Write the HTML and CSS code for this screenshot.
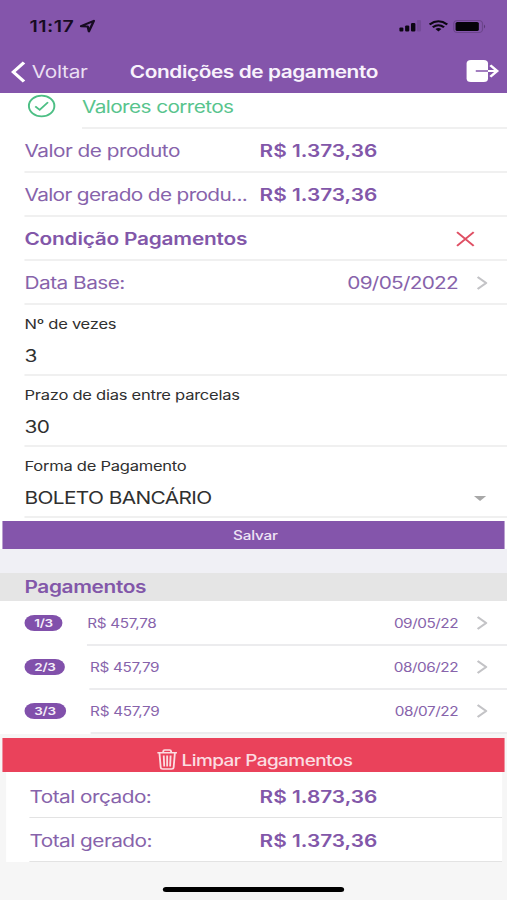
FILE: index.html
```html
<!DOCTYPE html>
<html lang="pt-BR">
<head>
    <meta charset="UTF-8">
    <meta name="viewport" content="width=device-width, initial-scale=1.0">
    <title>Condições de pagamento</title>
    <link rel="stylesheet" href="styles.css">
</head>
<body>
    <div class="screen">
        <header class="header">
            <div class="status">
                <span class="time">11:17</span>
                <svg class="location" width="13" height="14" viewBox="0 0 13 14"><path d="M1.2 7.2L11.6 1.8L7.6 12.4L6.6 7.4Z" fill="none" stroke="#170b22" stroke-width="2" stroke-linejoin="round"/></svg>
                <svg class="signal" width="18" height="12" viewBox="0 0 18 12">
                    <g fill="#0c0612"><rect x="0" y="7.5" width="3.4" height="4" rx="1"/><rect x="4.8" y="5.5" width="3.4" height="6" rx="1"/><rect x="9.6" y="3" width="3.6" height="8.5" rx="1"/></g>
                    <rect x="14.4" y="0" width="3.4" height="11.5" rx="1" fill="#754b98"/>
                </svg>
                <svg class="wifi" width="16" height="12" viewBox="0 0 16 12" fill="none" stroke="#0c0612" stroke-width="2"><path d="M.8 4.4Q8-2 15.2 4.4"/><path d="M3.4 7.3Q8 3.2 12.6 7.3"/><path d="M5.6 8.9Q8 7 10.4 8.9L8 11.6Z" fill="#0c0612" stroke="none"/></svg>
                <svg class="battery" width="27" height="13" viewBox="0 0 27 13"><rect x=".5" y=".5" width="23.5" height="12" rx="3" fill="none" stroke="#6c458c"/><rect x="2" y="2" width="19" height="9" rx="1.5" fill="#050308"/><path d="M25.3 4.5Q27 6.5 25.3 8.5Z" fill="#54366e"/></svg>
            </div>
            <div class="nav">
                <a class="back">
                    <svg width="12" height="22" viewBox="0 0 12 22"><path d="M10.6 1.5L1.8 11L10.6 20.5" fill="none" stroke="#fff" stroke-width="2.8"/></svg>
                    <span>Voltar</span>
                </a>
                <h1>Condições de pagamento</h1>
                <svg class="exit" width="28" height="24" viewBox="0 0 28 24"><rect x="1" y="1" width="17.5" height="22" rx="3.5" fill="#fff"/><path d="M8.5 12H18.5" stroke="#8455ab" stroke-width="1.6"/><path d="M18.5 12H26M20.4 6.2L26 12L20.4 17.8" fill="none" stroke="#fff" stroke-width="2.2"/></svg>
            </div>
        </header>

        <main>
            <div class="row first">
                <svg class="check" width="24" height="24" viewBox="0 0 24 24" fill="none" stroke="#4dbf85" stroke-width="1.6"><circle cx="12" cy="12" r="10.4"/><path d="M6.8 12.4L10.4 15.8L17.2 8.2"/></svg>
                <span class="correct">Valores corretos</span>
            </div>
            <div class="row">
                <span class="label">Valor de produto</span>
                <b>R$ 1.373,36</b>
            </div>
            <div class="row">
                <span class="label long">Valor gerado de produ...</span>
                <b>R$ 1.373,36</b>
            </div>
            <div class="row">
                <h2>Condição Pagamentos</h2>
                <svg class="close" width="16" height="16" viewBox="0 0 16 16"><path d="M1.2 1.2L14.8 14.8M14.8 1.2L1.2 14.8" stroke="#df5064" stroke-width="1.7"/></svg>
            </div>
            <div class="row">
                <span class="label">Data Base:</span>
                <span class="date">09/05/2022</span>
                <svg class="chevron" width="9" height="14" viewBox="0 0 9 14"><path d="M1 1L8 7L1 13"/></svg>
            </div>
            <div class="field">
                <label>Nº de vezes</label>
                <span class="value">3</span>
            </div>
            <div class="field">
                <label>Prazo de dias entre parcelas</label>
                <span class="value">30</span>
            </div>
            <div class="field">
                <label>Forma de Pagamento</label>
                <span class="value">BOLETO BANCÁRIO <i class="arrow"></i></span>
            </div>
            <button class="save">Salvar</button>

            <h2 class="section">Pagamentos</h2>
            <div class="payment">
                <span class="badge">1/3</span>
                <div class="info">
                    <span>R$ 457,78</span>
                    <span class="due">09/05/22</span>
                    <svg class="chevron" width="9" height="14" viewBox="0 0 9 14"><path d="M1 1L8 7L1 13"/></svg>
                </div>
            </div>
            <div class="payment">
                <span class="badge">2/3</span>
                <div class="info">
                    <span>R$ 457,79</span>
                    <span class="due">08/06/22</span>
                    <svg class="chevron" width="9" height="14" viewBox="0 0 9 14"><path d="M1 1L8 7L1 13"/></svg>
                </div>
            </div>
            <div class="payment">
                <span class="badge">3/3</span>
                <div class="info">
                    <span>R$ 457,79</span>
                    <span class="due">08/07/22</span>
                    <svg class="chevron" width="9" height="14" viewBox="0 0 9 14"><path d="M1 1L8 7L1 13"/></svg>
                </div>
            </div>
        </main>

        <footer>
            <button class="clear">
                <svg width="17" height="21" viewBox="0 0 17 21" fill="none" stroke="#fbdde1" stroke-width="1.5"><path d="M.5 3.8H16.5M5.3 3.6V2.2Q5.3 1 6.5 1H10.5Q11.7 1 11.7 2.2V3.6M2.2 4L3.2 18.2Q3.3 20 5 20H12Q13.7 20 13.8 18.2L14.8 4M5.7 6.5L6.1 17.5M8.5 6.5V17.5M11.3 6.5L10.9 17.5"/></svg>
                <span>Limpar Pagamentos</span>
            </button>
            <div class="totals">
                <div class="total">
                    <span class="label">Total orçado:</span>
                    <b>R$ 1.873,36</b>
                </div>
                <div class="total">
                    <span class="label">Total gerado:</span>
                    <b>R$ 1.373,36</b>
                </div>
            </div>
            <div class="home"></div>
        </footer>
    </div>
</body>
</html>
```
FILE: styles.css
```css
* {
    box-sizing: border-box;
}

body {
    margin: 0;
    overflow: hidden;
    font-family: Inter, "Liberation Sans", sans-serif;
    background-color: #f6f6f6;
}

.screen {
    width: 414px;
    height: 900px;
    overflow: hidden;
    transform: scaleX(1.22464);
    transform-origin: 0 0;
    font-size: 17px;
    color: #8763ab;
    background-color: #f6f6f6;
}

h1, h2 {
    margin: 0;
    font-size: 17px;
    font-weight: 600;
}

button {
    display: flex;
    align-items: center;
    justify-content: center;
    width: 410px;
    padding: 0;
    border: none;
    font-family: inherit;
}

.header {
    height: 93px;
    background-color: #8455ab;
    color: #fff;
}

.status {
    display: flex;
    align-items: center;
    height: 52px;
    padding: 0 17px 0 24px;
}

.time {
    width: 37px;
    font-size: 16px;
    font-weight: 600;
    letter-spacing: 0.4px;
    color: #170b22;
}

.location {
    margin-left: 4px;
}

.signal {
    margin-left: auto;
}

.wifi {
    margin: 0 4px 0 6px;
}

.nav {
    display: flex;
    align-items: center;
    height: 38px;
    padding: 1px 6px 0 9px;
}

.back {
    display: flex;
    align-items: center;
    gap: 5px;
    width: 97px;
    letter-spacing: -0.25px;
    color: #eadff2;
}

.nav h1 {
    letter-spacing: -0.34px;
    color: #f8f2fc;
}

.exit {
    margin: 0 0 1px auto;
}

main {
    height: 641px;
    background-color: #fff;
}

.row {
    display: flex;
    align-items: center;
    height: 44px;
    margin-left: 20px;
    padding-top: 2px;
    border-bottom: 2px solid #f0f0f0;
}

.row.first {
    position: relative;
    height: 36px;
    margin-left: 67px;
    padding-bottom: 8px;
}

.check {
    position: absolute;
    left: -45.5px;
    top: 1px;
}

.correct {
    letter-spacing: -0.5px;
    color: #58c48d;
}

.label {
    width: 192px;
    letter-spacing: -0.43px;
    white-space: nowrap;
}

.label.long {
    letter-spacing: -0.53px;
}

b {
    font-weight: 600;
    color: #8257a9;
}

.row h2 {
    letter-spacing: -0.17px;
    color: #8257a9;
}

.close {
    margin: 0 26px 0 auto;
}

.date, .due {
    margin-left: auto;
}

.date {
    letter-spacing: -0.6px;
}

.chevron {
    margin: 0 16px 0 15px;
    fill: none;
    stroke: #c3c3c6;
    stroke-width: 1.8;
}

.field {
    display: flex;
    flex-direction: column;
    height: 71px;
    margin-left: 20px;
    padding-top: 10px;
    border-bottom: 2px solid #f0f0f0;
    color: #303030;
}

.field label {
    height: 18px;
    font-size: 13.5px;
    line-height: 18px;
    letter-spacing: -0.21px;
}

.value {
    display: flex;
    align-items: center;
    justify-content: space-between;
    height: 24px;
    margin-top: 11px;
    padding-right: 17px;
    letter-spacing: -0.5px;
}

.arrow {
    border: 5px solid transparent;
    border-top-color: #a8a8a8;
    border-bottom: none;
}

.save {
    height: 28px;
    margin: 3px 2px 0;
    padding-left: 3px;
    background-color: #8455ab;
    color: #efe4f5;
    font-size: 12.5px;
    font-weight: 500;
    letter-spacing: -0.15px;
}

.section {
    height: 52px;
    margin-bottom: 1px;
    padding-left: 20px;
    line-height: 28px;
    letter-spacing: -0.3px;
    border-top: 24px solid #f0f0f5;
    background-color: #e5e5e5;
    color: #8257a9;
}

.payment {
    display: flex;
    align-items: center;
    gap: 20px;
    height: 44px;
    padding-left: 20px;
    font-size: 12.5px;
    letter-spacing: -0.25px;
}

.badge {
    margin-bottom: 2px;
    padding: 0 8px;
    border-radius: 8px;
    font-size: 11px;
    font-weight: 600;
    line-height: 16px;
    letter-spacing: -0.2px;
    background-color: #8150ab;
    color: #f5eef9;
}

.info {
    display: flex;
    flex: 1;
    align-items: center;
    height: 44px;
    border-bottom: 2px solid #ececee;
}

.due {
    letter-spacing: -0.38px;
}

footer {
    padding-top: 4px;
}

.clear {
    gap: 3px;
    height: 34px;
    margin: 0 2px;
    padding: 9px 0 0 2px;
    background-color: #ea425b;
    color: #fbdde1;
    font-size: 15.5px;
    font-weight: 500;
    letter-spacing: -0.45px;
}

.clear span {
    padding-top: 1px;
}

.totals {
    width: 405px;
    margin-left: 5px;
    padding-top: 2px;
    background-color: #fff;
}

.total {
    display: flex;
    align-items: center;
    height: 44px;
    margin-left: 19px;
    padding-top: 2px;
    border-bottom: 1px solid #e3e3e3;
}

.total .label {
    width: 188px;
}

.home {
    width: 148px;
    height: 5px;
    margin: 25px auto 0;
    border-radius: 3px;
    background-color: #000;
}
```
